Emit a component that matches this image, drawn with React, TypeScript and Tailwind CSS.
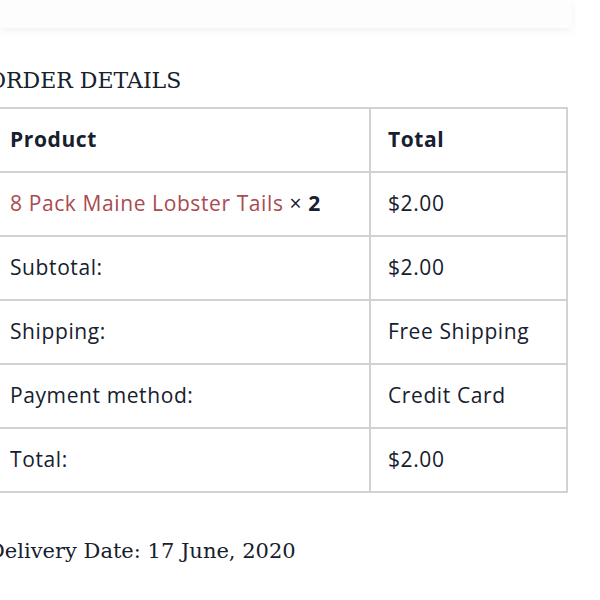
import React from 'react';

type Row = { label: React.ReactNode; value: string; head?: boolean };

const rows: Row[] = [
  { label: 'Product', value: 'Total', head: true },
  {
    label: (
      <>
        <span className="text-[#a94b50]">8 Pack Maine Lobster Tails</span>
        <span className="text-[#16202e]"> × </span>
        <span className="font-bold text-[#16202e]">2</span>
      </>
    ),
    value: '$2.00',
  },
  { label: 'Subtotal:', value: '$2.00' },
  { label: 'Shipping:', value: 'Free Shipping' },
  { label: 'Payment method:', value: 'Credit Card' },
  { label: 'Total:', value: '$2.00' },
];

export default function App() {
  return (
    <div className="w-[600px] h-[600px] overflow-hidden bg-white">
      {/* faint card edge at the top */}
      <div className="h-[28px] w-[572px] bg-[#fdfdfd] shadow-[0_3px_8px_rgba(0,0,0,0.05)]" />

      <div className="ml-[-12px] w-[578px]">
        <h2 className="mt-[38px] text-[22px] leading-[30px] text-[#16202e] font-['DejaVu_Serif',serif]">
          ORDER DETAILS
        </h2>

        <table className="mt-[11px] w-[578px] table-fixed border-collapse font-['Open_Sans',sans-serif] text-[21px] tracking-[0.6px] text-[#16202e]">
          <colgroup>
            <col className="w-[381px]" />
            <col className="w-[197px]" />
          </colgroup>
          <tbody>
            {rows.map((r, i) => (
              <tr key={i} className="h-[64px]">
                <td className={`border-2 border-[#d2d2d2] pl-[20px] ${r.head ? 'font-bold' : ''}`}>
                  {r.label}
                </td>
                <td className={`border-2 border-[#d2d2d2] pl-[17px] ${r.head ? 'font-bold' : ''}`}>
                  {r.value}
                </td>
              </tr>
            ))}
          </tbody>
        </table>

        <p className="mt-[43px] text-[21px] leading-[30px] text-[#16202e] font-['DejaVu_Serif',serif]">
          Delivery Date: 17 June, 2020
        </p>
      </div>
    </div>
  );
}
